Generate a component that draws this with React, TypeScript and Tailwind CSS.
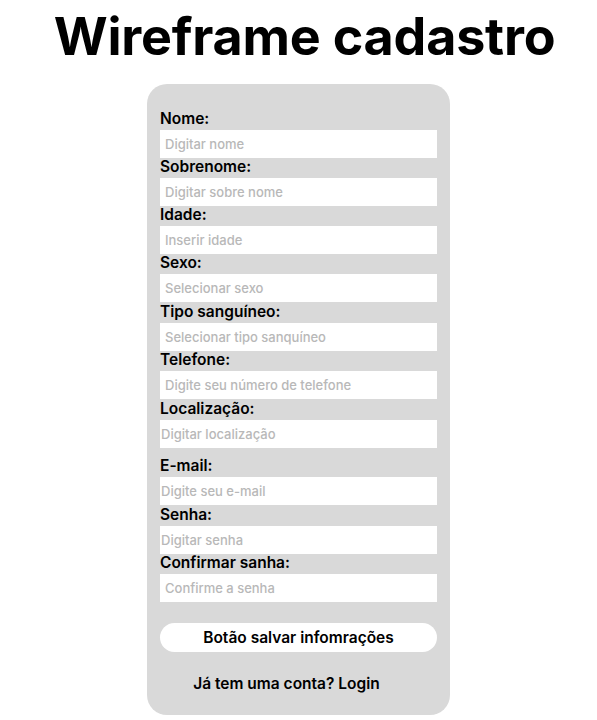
const fields: { label: string; placeholder: string; top: string; pad: string }[] = [
  { label: "Nome:", placeholder: "Digitar nome", top: "h-[46px]", pad: "pl-[5px]" },
  { label: "Sobrenome:", placeholder: "Digitar sobre nome", top: "h-[20px]", pad: "pl-[5px]" },
  { label: "Idade:", placeholder: "Inserir idade", top: "h-[20px]", pad: "pl-[5px]" },
  { label: "Sexo:", placeholder: "Selecionar sexo", top: "h-[20px]", pad: "pl-[5px]" },
  { label: "Tipo sanguíneo:", placeholder: "Selecionar tipo sanquíneo", top: "h-[21px]", pad: "pl-[5px]" },
  { label: "Telefone:", placeholder: "Digite seu número de telefone", top: "h-[20px]", pad: "pl-[5px]" },
  { label: "Localização:", placeholder: "Digitar localização", top: "h-[21px]", pad: "pl-[1px]" },
  { label: "E-mail:", placeholder: "Digite seu e-mail", top: "h-[29px]", pad: "pl-[1px]" },
  { label: "Senha:", placeholder: "Digitar senha", top: "h-[21px]", pad: "pl-[1px]" },
  { label: "Confirmar sanha:", placeholder: "Confirme a senha", top: "h-[20px]", pad: "pl-[5px]" },
];

export default function App() {
  return (
    <div className="min-h-[720px] w-[597px] bg-white font-['Inter','Liberation_Sans',sans-serif] text-black">
      <h1 className="pt-[6px] pl-[12px] text-center text-[52px] font-bold leading-[62px] tracking-[-0.2px]">
        Wireframe cadastro
      </h1>
      <div className="mx-auto mt-[16px] w-[303px] rounded-[20px] bg-[#d9d9d9] px-[13px] pb-[21px]">
        {fields.map((f) => (
          <div key={f.label}>
            <div className={`${f.top} flex items-end pb-[1px] text-[15.5px] font-semibold leading-[20px]`}>
              {f.label}
            </div>
            <div
              className={`flex h-[28px] items-center bg-white ${f.pad} text-[13px] font-medium leading-[16px] text-[#b8b8b8]`}
            >
              {f.placeholder}
            </div>
          </div>
        ))}
        <button className="mt-[21px] h-[29px] w-full rounded-full bg-white text-[15.5px] font-semibold">
          Botão salvar infomrações
        </button>
        <div className="mt-[22px] pr-[24px] text-center text-[15.5px] font-semibold leading-[20px]">
          Já tem uma conta? Login
        </div>
      </div>
    </div>
  );
}
